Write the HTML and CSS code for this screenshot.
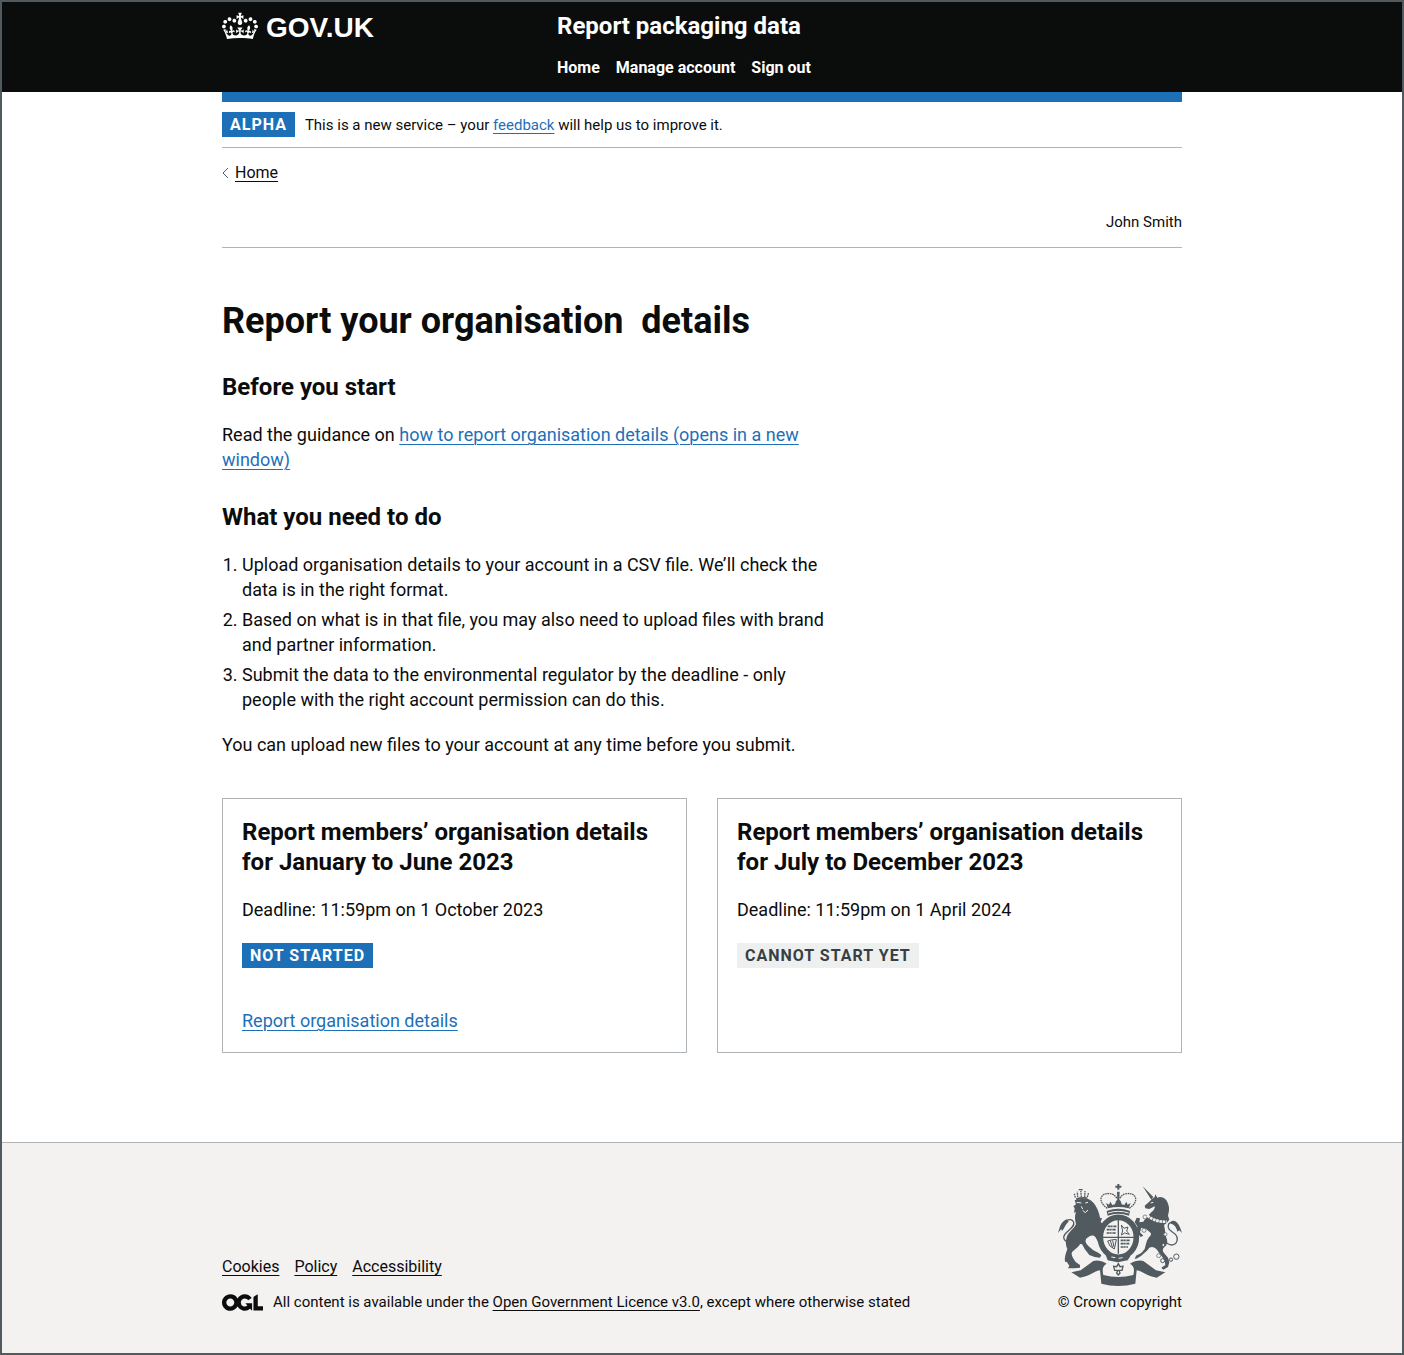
FILE: index.html
```html
<!DOCTYPE html>
<html lang="en">
<head>
<meta charset="utf-8">
<meta name="viewport" content="width=device-width, initial-scale=1">
<title>Report your organisation details</title>
<link rel="stylesheet" href="styles.css">
</head>
<body class="page">
<header class="header">
  <div class="container header-inner">
    <div class="header-logo">
      <a class="logo-link" href="#">
        <svg class="crown" viewBox="0 0 132 97" aria-hidden="true"><path fill="currentColor" fill-rule="evenodd" d="M25 30.2c3.5 1.5 7.7-.2 9.1-3.7 1.5-3.6-.2-7.8-3.9-9.2-3.6-1.4-7.6.3-9.1 3.9-1.4 3.5.3 7.5 3.9 9zM9 39.5c3.6 1.5 7.8-.2 9.2-3.7 1.5-3.6-.2-7.8-3.9-9.1-3.6-1.5-7.6.2-9.1 3.8-1.4 3.5.3 7.5 3.8 9zM4.4 57.2c3.5 1.5 7.7-.2 9.1-3.8 1.5-3.6-.2-7.7-3.9-9.1-3.5-1.5-7.6.3-9.1 3.8-1.4 3.5.3 7.6 3.9 9.1zm38.3-21.4c3.5 1.5 7.7-.2 9.1-3.8 1.5-3.6-.2-7.7-3.9-9.1-3.6-1.5-7.6.3-9.1 3.8-1.3 3.6.4 7.7 3.9 9.1zm64.4-5.6c-3.6 1.5-7.8-.2-9.1-3.7-1.5-3.6.2-7.8 3.8-9.2 3.6-1.4 7.7.3 9.2 3.9 1.3 3.5-.4 7.5-3.9 9zm15.9 9.3c-3.6 1.5-7.7-.2-9.1-3.7-1.5-3.6.2-7.8 3.7-9.1 3.6-1.5 7.7.2 9.2 3.8 1.5 3.5-.3 7.5-3.8 9zm4.7 17.7c-3.6 1.5-7.8-.2-9.2-3.8-1.5-3.6.2-7.7 3.9-9.1 3.6-1.5 7.7.3 9.2 3.8 1.3 3.5-.4 7.6-3.9 9.1zM89.3 35.8c-3.6 1.5-7.8-.2-9.2-3.8-1.4-3.6.2-7.7 3.9-9.1 3.6-1.5 7.7.3 9.2 3.8 1.4 3.6-.3 7.7-3.9 9.1zM69.7 17.7l8.9 4.7V9.3l-8.9 2.8c-.2-.3-.5-.6-.9-.9L72.4 0H59.6l3.5 11.2c-.3.3-.6.5-.9.9l-8.8-2.8v13.1l8.8-4.7c.3.3.6.7.9.9l-5 15.4v.1c-.2.8-.4 1.6-.4 2.4 0 4.1 3.1 7.5 7 8.1h.2c.3 0 .7.1 1 .1.4 0 .7 0 1-.1h.2c4-.6 7.1-4.1 7.1-8.1 0-.8-.1-1.7-.4-2.4V34l-5.1-15.4c.4-.2.7-.6 1-.9zM66 92.8c16.9 0 32.8 1.1 47.1 3.2 4-16.9 8.9-26.7 14-33.5l-9.6-3.4c1 4.9 1.1 7.2 0 10.2-1.5-1.4-3-4.3-4.2-8.7L108.6 76c2.8-2 5-3.2 7.5-3.3-4.4 9.4-10 11.9-13.6 11.2-4.3-.8-6.3-4.6-5.6-7.9 1-4.7 5.7-5.9 8-.5 4.3-8.7-3-11.4-7.6-8.8 7.1-7.2 7.9-13.5 2.1-21.1-8 6.1-8.1 12.3-4.5 20.8-4.7-5.4-12.1-2.5-9.5 6.2 3.4-5.2 7.9-2 7.2 3.1-.6 4.3-6.4 7.8-13.5 7.2-10.3-.9-10.9-8-11.2-13.8 2.5-.5 7.1 1.8 11 7.3L80.2 60c-4.1 4.4-8 5.3-12.3 5.4 1.4-4.4 8-11.6 8-11.6H55.5s6.4 7.2 7.9 11.6c-4.2-.1-8-1-12.3-5.4l1.4 16.4c3.9-5.5 8.5-7.7 10.9-7.3-.3 5.8-.9 12.8-11.1 13.8-7.2.6-12.9-2.9-13.5-7.2-.7-5 3.8-8.3 7.1-3.1 2.7-8.7-4.6-11.6-9.4-6.2 3.7-8.5 3.6-14.7-4.6-20.8-5.8 7.6-5 13.9 2.2 21.1-4.7-2.6-11.9.1-7.7 8.8 2.3-5.5 7.1-4.2 8.1.5.7 3.3-1.3 7.1-5.7 7.9-3.5.7-9-1.8-13.5-11.2 2.5.1 4.7 1.3 7.5 3.3l-4.7-15.4c-1.2 4.4-2.7 7.2-4.3 8.7-1.1-3-.9-5.3 0-10.2l-9.5 3.4c5 6.9 9.9 16.7 14 33.5 14.8-2.1 30.8-3.2 47.7-3.2z"/></svg>
        <span class="logo-text">GOV.UK</span>
      </a>
    </div>
    <div class="header-content">
      <a class="service-name" href="#">Report packaging data</a>
      <nav class="header-nav" aria-label="Menu">
        <a href="#">Home</a>
        <a href="#">Manage account</a>
        <a href="#">Sign out</a>
      </nav>
    </div>
  </div>
</header>

<div class="container body-wrap">
  <div class="phase-banner">
    <strong class="tag">ALPHA</strong>
    <span>This is a new service – your <a class="link" href="#">feedback</a> will help us to improve it.</span>
  </div>
  <div class="back">
    <svg class="chevron" viewBox="0 0 7 12" aria-hidden="true"><path d="M6 1 1 6l5 5" fill="none" stroke="#505a5f"/></svg>
    <a class="plain-link" href="#">Home</a>
  </div>
  <div class="user-bar">John Smith</div>

  <main class="main">
    <div class="column">
      <h1 class="heading-l">Report your organisation&nbsp; details</h1>
      <h2 class="heading-m">Before you start</h2>
      <p class="text">Read the guidance on <a class="link" href="#">how to report organisation details (opens in a new window)</a></p>
      <h2 class="heading-m">What you need to do</h2>
      <ol class="steps">
        <li>Upload organisation details to your account in a CSV file. We’ll check the data is in the right format.</li>
        <li>Based on what is in that file, you may also need to upload files with brand and partner information.</li>
        <li>Submit the data to the environmental regulator by the deadline - only people with the right account permission can do this.</li>
      </ol>
      <p class="text">You can upload new files to your account at any time before you submit.</p>
    </div>
    <div class="cards">
      <section class="card">
        <h2 class="card-title">Report members’ organisation details for January to June 2023</h2>
        <p class="card-text">Deadline: 11:59pm on 1 October 2023</p>
        <strong class="tag">NOT STARTED</strong>
        <a class="link card-link" href="#">Report organisation details</a>
      </section>
      <section class="card">
        <h2 class="card-title">Report members’ organisation details for July to December 2023</h2>
        <p class="card-text">Deadline: 11:59pm on 1 April 2024</p>
        <strong class="tag tag-grey">CANNOT START YET</strong>
      </section>
    </div>
  </main>
</div>

<footer class="footer">
  <div class="container footer-inner">
    <div class="footer-meta">
      <nav class="footer-links" aria-label="Support links">
        <a class="plain-link" href="#">Cookies</a>
        <a class="plain-link" href="#">Policy</a>
        <a class="plain-link" href="#">Accessibility</a>
      </nav>
      <div class="licence">
        <svg class="ogl" viewBox="0 0 483.2 195.7" role="img" aria-label="Open Government Licence"><path fill="currentColor" d="M421.5 142.8V.1l-50.7 32.3v161.1h112.4v-50.7zm-122.3-9.6A47.12 47.12 0 0 1 221 97.8c0-26 21.1-47.1 47.1-47.1 16.7 0 31.4 8.7 39.7 21.8l42.7-27.2A97.63 97.63 0 0 0 268.1 0c-36.5 0-68.3 20.1-85.1 49.7A98 98 0 0 0 97.8 0C43.9 0 0 43.9 0 97.8s43.9 97.8 97.8 97.8c36.5 0 68.3-20.1 85.1-49.7a97.76 97.76 0 0 0 149.6 25.4l19.4 22.2h3v-87.8h-80l24.3 27.5zM97.8 145c-26 0-47.1-21.1-47.1-47.1s21.1-47.1 47.1-47.1 47.1 21.1 47.1 47.1S123.8 145 97.8 145"/></svg>
        <span>All content is available under the <a class="plain-link" href="#">Open Government Licence v3.0</a>, except where otherwise stated</span>
      </div>
    </div>
    <a class="crest-link" href="#">
      <svg class="crest" viewBox="54 42 372 312" aria-hidden="true">
        <g fill="#505a5f">
          <!-- lion -->
          <path d="M104 94C120 90 140 86 152 94C166 104 176 124 180 146L186 148L182 158L190 168L184 178C190 190 188 200 182 208L190 216L186 226L174 218L166 204C158 196 150 200 140 208C134 216 136 222 146 232L160 244L176 252L184 258L180 266L164 264L148 258L134 240C128 228 126 222 120 226C112 238 100 244 96 250C92 256 100 270 108 280L120 288L120 296L104 298L84 298L88 290L80 278C72 284 74 262 78 252L82 240C76 228 76 210 84 196C92 184 104 176 108 166C104 150 104 140 108 128L102 132L104 118L100 112L108 106Z"/>
          <path d="M108 88q16-6 34-3v5q-16-2-33 4z"/>
          <path d="M54 192C60 176 60 160 80 151L86 158C76 166 72 180 66 186L64 180Z"/>
          <!-- unicorn -->
          <path d="M308 52L340 84L334 92ZM334 92L344 84L346 76L352 86C366 80 380 90 384 104C390 118 386 130 384 140L388 152L380 162L372 168C376 184 376 196 378 204C384 216 382 226 376 232C368 238 366 244 372 252L384 266L388 280L384 294L370 302L364 296L376 288L374 274L356 250C350 238 340 230 328 236C322 246 312 252 304 260L292 268L284 270L288 260L304 252L314 240C318 228 318 216 326 206C332 200 336 196 330 190L318 180L304 176L300 190L310 200L302 204L290 190L292 172L284 160L290 146L300 148L298 160L310 158L318 146L326 138L334 130C342 124 346 116 344 112L328 120L316 118L314 110L326 100Z"/>
          <path d="M392 158C408 148 420 170 426 192L418 184L412 188C410 176 404 166 392 164Z"/>
          <!-- crown -->
          <path d="M200 126q35-13 70 0l-3 14q-32-11-64 0zM232 45h6v5h6v6h-6v6h-6v-6h-6v-6h6zM231 68h8l-1 30h-6z"/>
          <path d="M204 118l-6-16 9 5 4-9 6 10 8-2 3-10 7-5 7 5 3 10 8 2 6-10 4 9 9-5-6 16q-31-8-62 0z"/>
          <!-- ribbon -->
          <path d="M94 310L122 304L160 276C172 272 186 276 200 284C188 290 186 300 190 318Q235 330 280 318C284 300 282 290 270 284C284 276 298 272 310 276L348 304L376 310L350 326C326 324 306 306 290 304L286 344Q235 358 184 344L180 304C164 306 144 324 120 326Z"/>
          <path d="M195 252l14 6 24 6 28-6 10 4-8 12-30 6-30-6z"/>
        </g>
        <g fill="none" stroke="#505a5f">
          <path d="M92 222C70 218 66 204 78 192C92 178 104 172 101 160C98 150 88 150 78 156M380 222C400 236 415 222 411 204C406 188 388 190 385 176C383 164 388 160 398 160" stroke-width="4"/>
          <path d="M106 86l-3-12M113 84l-1-16M124 84l-2-24M134 84l1-18M142 84l4-13M116 62h12" stroke-width="4" stroke-dasharray="5 2"/>
          <path d="M202 118C170 96 182 70 210 74Q226 76 231 90M268 118C300 96 288 70 260 74Q244 76 239 90" stroke-width="4" stroke-dasharray="5 2"/>
          <ellipse cx="235" cy="205" rx="54" ry="60" stroke-width="17"/>
          <path d="M235 150v104M188 205h94" stroke-width="4"/>
          <path d="M203 172h26M200 182h28M200 192h28M242 214h28M242 224h26M242 234h22" stroke-width="5" stroke-dasharray="9 1 5 2"/>
          <path d="M244 168l8 10 12-4-4 12 8 10-14-4-10 6 4-12zM203 216q20-6 26-4l-6 28q-16-6-20-24zM211 215l7 22M218 214l4 20" stroke-width="3"/>
          <path d="M235 284l5 9 9-1-3 12-9 0 3 8-5 6-5-6 3-8-9 0-3-12 9 1z" stroke-width="4"/>
          <circle cx="409" cy="263" r="8" stroke-width="3"/><circle cx="393" cy="272" r="5" stroke-width="3"/><circle cx="368" cy="275" r="6" stroke-width="3"/>
        </g>
        <g fill="#f3f2f1" stroke="#505a5f" stroke-width="2">
          <circle cx="312" cy="184" r="6"/><circle cx="315" cy="144" r="6"/><circle cx="356" cy="260" r="6"/><circle cx="376" cy="196" r="5"/><circle cx="370" cy="228" r="4"/>
        </g>
        <path d="M322 140q26 20 58 18" fill="none" stroke="#f3f2f1" stroke-width="8" stroke-dasharray="8 2"/>
        <path d="M110 100l14 2M136 102l8-2M128 124l8 7 8-8M214 264l12 2M236 268l12-2M332 102l8-2M124 112l4 8M204 132q31-10 62 0" fill="none" stroke="#f3f2f1" stroke-width="3"/>
      </svg>
      <span>© Crown copyright</span>
    </a>
  </div>
</footer>
</body>
</html>
```
FILE: styles.css
```css
* {
  box-sizing: border-box;
}

.page {
  display: flex;
  flex-direction: column;
  min-height: 100vh;
  margin: 0;
  border: 2px solid #505a5f;
  background: #fff;
  color: #0b0c0c;
  font: 16px/20px Roboto, "Liberation Sans", sans-serif;
}

.container {
  width: 100%;
  max-width: 960px;
  margin: 0 auto;
}

.header {
  background: #0b0c0c;
  color: #fff;
}

.header-inner {
  display: flex;
  padding-bottom: 14px;
}

.header a {
  color: #fff;
  text-decoration: none;
}

.header-logo {
  flex: 0 0 335px;
  padding-top: 10px;
}

.logo-link {
  display: flex;
  gap: 8px;
}

.crown {
  width: 36px;
  height: 28px;
}

.logo-text {
  font: bold 28px/32px "Liberation Sans", sans-serif;
}

.service-name {
  display: block;
  padding-top: 9px;
  font-size: 24px;
  font-weight: bold;
  line-height: 30px;
}

.header-nav {
  display: flex;
  gap: 16px;
  padding-top: 17px;
  font-weight: bold;
}

.body-wrap {
  flex: 1;
  border-top: 10px solid #1d70b8;
}

.phase-banner {
  display: flex;
  align-items: center;
  gap: 10px;
  padding: 10px 0;
  border-bottom: 1px solid #b1b4b6;
  font-size: 15px;
}

.tag {
  display: inline-block;
  padding: 0 8px;
  background: #1d70b8;
  color: #fff;
  font-size: 16px;
  line-height: 25px;
  letter-spacing: 1px;
}

.tag-grey {
  background: #eeefef;
  color: #383f43;
}

.link,
.plain-link {
  color: #1d70b8;
  text-decoration: underline;
  text-decoration-thickness: 1px;
  text-underline-offset: 3px;
}

.plain-link {
  color: #0b0c0c;
}

.back {
  display: flex;
  align-items: center;
  gap: 6px;
  padding-top: 15px;
}

.chevron {
  width: 7px;
  height: 12px;
}

.user-bar {
  margin-top: 29px;
  padding-bottom: 15px;
  border-bottom: 1px solid #b1b4b6;
  font-size: 15px;
  text-align: right;
}

.main {
  padding: 52px 0 89px;
}

.column {
  max-width: 612px;
}

.heading-l {
  margin: 0 0 30px;
  font-size: 36px;
  line-height: 42px;
}

.heading-m {
  margin: 0 0 20px;
  font-size: 24px;
  line-height: 30px;
}

.text,
.card-text {
  margin: 0 0 20px;
  font-size: 18px;
  line-height: 25px;
}

.text + .heading-m {
  margin-top: 30px;
}

.steps {
  margin: 0 0 20px;
  padding-left: 20px;
  font-size: 18px;
  line-height: 25px;
}

.steps li + li {
  margin-top: 5px;
}

.cards {
  display: grid;
  grid-template-columns: 1fr 1fr;
  gap: 30px;
  margin-top: 41px;
}

.card {
  padding: 18px 19px 19px;
  border: 1px solid #b1b4b6;
}

.card-title {
  margin: 0 0 20px;
  font-size: 24px;
  line-height: 30px;
}

.card-text {
  margin-bottom: 21px;
}

.card-link {
  display: block;
  width: fit-content;
  margin-top: 40px;
  font-size: 18px;
  line-height: 25px;
}

.footer {
  border-top: 1px solid #b1b4b6;
  background: #f3f2f1;
}

.footer-inner {
  display: flex;
  align-items: flex-end;
  justify-content: space-between;
  padding: 40px 0 41px;
}

.footer-links {
  display: flex;
  gap: 15px;
  margin-bottom: 15px;
}

.licence {
  display: flex;
  align-items: center;
  gap: 10px;
  font-size: 15px;
}

.ogl {
  width: 41px;
  height: 17px;
}

.crest-link {
  display: flex;
  flex-direction: column;
  align-items: center;
  gap: 5px;
  color: #0b0c0c;
  font-size: 15px;
  text-decoration: none;
}

.crest {
  width: 124px;
  height: 104px;
}
```
